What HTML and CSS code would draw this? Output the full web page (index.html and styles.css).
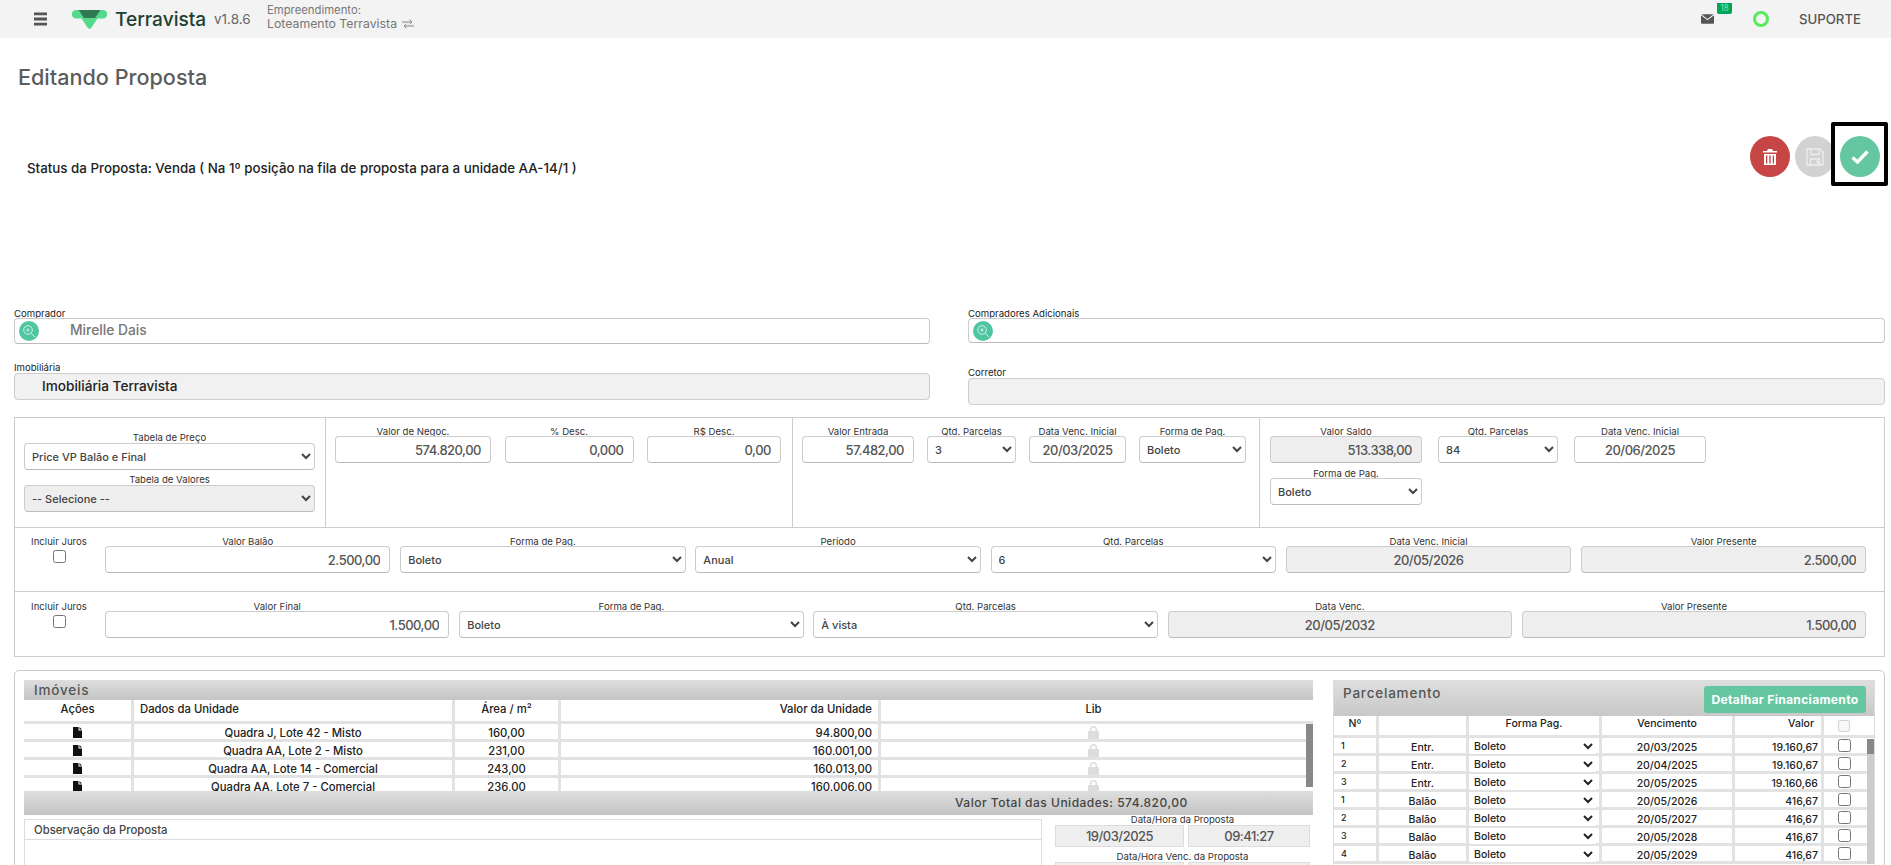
FILE: index.html
```html
<!DOCTYPE html>
<html lang="pt-BR">
<head>
<meta charset="utf-8">
<title>Editando Proposta</title>
<link rel="stylesheet" href="styles.css">
</head>
<body>
<header class="topbar">
  <svg class="burger" viewBox="0 0 14 14"><path d="M0 0h14v3H0zM0 5.500h14v3H0zM0 11h14v3H0z"/></svg>
  <svg class="logo" viewBox="0 0 35 19"><path d="M4 0h27a4 4 0 0 1 0 8.500h-5.500L19.300 17.800a2.200 2.200 0 0 1-3.600 0L9.500 8.500H4a4 4 0 0 1 0-8.500z" fill="#55d98d"/><path d="M6.500 0h22l-5.500 8H12z" fill="#2f7a52"/></svg>
  <span class="brand">Terravista</span>
  <span class="version">v1.8.6</span>
  <div class="venture">
    <span>Empreendimento:</span>
    <span class="venture-name">Loteamento Terravista <svg class="swap" viewBox="0 0 12 10"><path d="M0 3h9.500M7.500 .8 10 3 7.500 5.200M12 7H2.500M4.500 4.800 2 7l2.500 2.200" fill="none" stroke="#888" stroke-width="1"/></svg></span>
  </div>
  <div class="top-right">
    <div class="mail">
      <svg viewBox="0 0 14 10"><path d="M.6 0h12.800L7 5zM0 1l7 5.400L14 1v8a1 1 0 0 1-1 1H1a1 1 0 0 1-1-1z" fill="#555"/></svg>
      <span class="badge">18</span>
    </div>
    <span class="ring"></span>
    <span class="support">SUPORTE</span>
  </div>
</header>

<main class="page">
  <h1 class="title">Editando Proposta</h1>

  <section class="status-row">
    <p class="status">Status da Proposta: Venda ( Na 1º posição na fila de proposta para a unidade AA-14/1 )</p>
    <div class="actions">
      <button class="round red" type="button"><svg viewBox="0 0 14 16"><path d="M5 0h4l1 2h4v1.500H0V2h4zM1 5h12v11H1zM3 6.500v8h1.300v-8zM6.300 6.500v8h1.400v-8zM9.700 6.500v8H11v-8z" fill="#fff" fill-rule="evenodd"/></svg></button>
      <button class="round grey" type="button"><svg viewBox="0 0 18 18"><path d="M1 1h13l3 3v13H1zM5 1.500v5h8v-5M4.500 17v-6h9v6M10 13.500h2V17" fill="none" stroke="#eee" stroke-width="1.300"/></svg></button>
      <div class="focus-box">
        <button class="round green" type="button"><svg viewBox="0 0 18 14"><path d="M1.500 7.500 6.500 12 16.500 1.500" fill="none" stroke="#fff" stroke-width="3.400"/></svg></button>
      </div>
    </div>
  </section>

  <section class="people">
    <div class="person">
      <label class="lbl-left tight">Comprador</label>
      <div class="picker">
        <span class="lens"><svg viewBox="0 0 14 14"><circle cx="6" cy="6" r="4.300" fill="none" stroke="#cdf3e5" stroke-width="1"/><path d="M9.300 9.300 13 13M6 4.300v3.400M4.300 6h3.400" stroke="#cdf3e5" stroke-width="1" fill="none"/></svg></span>
        <span class="picker-text">Mirelle Dais</span>
      </div>
    </div>
    <div class="person">
      <label class="lbl-left tight">Compradores Adicionais</label>
      <div class="picker short">
        <span class="lens"><svg viewBox="0 0 14 14"><circle cx="6" cy="6" r="4.300" fill="none" stroke="#cdf3e5" stroke-width="1"/><path d="M9.300 9.300 13 13M6 4.300v3.400M4.300 6h3.400" stroke="#cdf3e5" stroke-width="1" fill="none"/></svg></span>
      </div>
    </div>
    <div class="person">
      <label class="lbl-left">Imobiliária</label>
      <div class="locked"><span>Imobiliária Terravista</span></div>
    </div>
    <div class="person lower">
      <label class="lbl-left">Corretor</label>
      <div class="locked"></div>
    </div>
  </section>

  <section class="deal">
    <div class="deal-top">
      <div class="cell cell-table">
        <div class="f"><label>Tabela de Preço</label><select><option>Price VP Balão e Final</option></select></div>
        <div class="f"><label>Tabela de Valores</label><select class="off"><option>-- Selecione --</option></select></div>
      </div>
      <div class="cell cell-neg">
        <div class="f"><label>Valor de Negoc.</label><input class="num" value="574.820,00" readonly></div>
        <div class="f"><label>% Desc.</label><input class="num" value="0,000" readonly></div>
        <div class="f"><label>R$ Desc.</label><input class="num" value="0,00" readonly></div>
      </div>
      <div class="cell cell-ent">
        <div class="f"><label>Valor Entrada</label><input class="num" value="57.482,00" readonly></div>
        <div class="f"><label>Qtd. Parcelas</label><select><option>3</option></select></div>
        <div class="f"><label>Data Venc. Inicial</label><input class="mid" value="20/03/2025" readonly></div>
        <div class="f"><label>Forma de Pag.</label><select><option>Boleto</option></select></div>
      </div>
      <div class="cell cell-saldo">
        <div class="f"><label>Valor Saldo</label><input class="num off" value="513.338,00" readonly></div>
        <div class="f"><label>Qtd. Parcelas</label><select><option>84</option></select></div>
        <div class="f"><label>Data Venc. Inicial</label><input class="mid" value="20/06/2025" readonly></div>
        <div class="f"><label>Forma de Pag.</label><select><option>Boleto</option></select></div>
      </div>
    </div>
    <div class="deal-row row-balao">
      <div class="juros"><label>Incluir Juros</label><input type="checkbox"></div>
      <div class="f"><label>Valor Balão</label><input class="num" value="2.500,00" readonly></div>
      <div class="f"><label>Forma de Pag.</label><select><option>Boleto</option></select></div>
      <div class="f"><label>Período</label><select><option>Anual</option></select></div>
      <div class="f"><label>Qtd. Parcelas</label><select><option>6</option></select></div>
      <div class="f"><label>Data Venc. Inicial</label><input class="mid off" value="20/05/2026" readonly></div>
      <div class="f"><label>Valor Presente</label><input class="num off" value="2.500,00" readonly></div>
    </div>
    <div class="deal-row row-final">
      <div class="juros"><label>Incluir Juros</label><input type="checkbox"></div>
      <div class="f"><label>Valor Final</label><input class="num" value="1.500,00" readonly></div>
      <div class="f"><label>Forma de Pag.</label><select><option>Boleto</option></select></div>
      <div class="f"><label>Qtd. Parcelas</label><select><option>À vista</option></select></div>
      <div class="f"><label>Data Venc.</label><input class="mid off" value="20/05/2032" readonly></div>
      <div class="f"><label>Valor Presente</label><input class="num off" value="1.500,00" readonly></div>
    </div>
  </section>

  <section class="lower-panel">
    <div class="lower-left">
      <div class="units">
        <div class="bar bar-title">Imóveis</div>
        <div class="units-head units-grid">
          <span class="c">Ações</span><span>Dados da Unidade</span><span class="c">Área / m²</span><span class="r">Valor da Unidade</span><span class="c">Lib</span>
        </div>
        <div class="units-body">
          <div class="units-rows">
            <div class="units-grid urow"><span class="c"><svg class="file" viewBox="0 0 9 11"><path d="M0 0h5.500v3.500H9V11H0zM6.500 0 9 2.500H6.500z"/></svg></span><span class="c">Quadra J, Lote 42 - Misto</span><span class="c">160,00</span><span class="r">94.800,00</span><span class="c"><svg class="lock" viewBox="0 0 11 13"><path d="M2 5V3.500a3.500 3.500 0 0 1 7 0V5h1a1 1 0 0 1 1 1v6a1 1 0 0 1-1 1H1a1 1 0 0 1-1-1V6a1 1 0 0 1 1-1zM3.500 5h4V3.500a2 2 0 0 0-4 0z"/></svg></span></div>
            <div class="units-grid urow"><span class="c"><svg class="file" viewBox="0 0 9 11"><path d="M0 0h5.500v3.500H9V11H0zM6.500 0 9 2.500H6.500z"/></svg></span><span class="c">Quadra AA, Lote 2 - Misto</span><span class="c">231,00</span><span class="r">160.001,00</span><span class="c"><svg class="lock" viewBox="0 0 11 13"><path d="M2 5V3.500a3.500 3.500 0 0 1 7 0V5h1a1 1 0 0 1 1 1v6a1 1 0 0 1-1 1H1a1 1 0 0 1-1-1V6a1 1 0 0 1 1-1zM3.500 5h4V3.500a2 2 0 0 0-4 0z"/></svg></span></div>
            <div class="units-grid urow"><span class="c"><svg class="file" viewBox="0 0 9 11"><path d="M0 0h5.500v3.500H9V11H0zM6.500 0 9 2.500H6.500z"/></svg></span><span class="c">Quadra AA, Lote 14 - Comercial</span><span class="c">243,00</span><span class="r">160.013,00</span><span class="c"><svg class="lock" viewBox="0 0 11 13"><path d="M2 5V3.500a3.500 3.500 0 0 1 7 0V5h1a1 1 0 0 1 1 1v6a1 1 0 0 1-1 1H1a1 1 0 0 1-1-1V6a1 1 0 0 1 1-1zM3.500 5h4V3.500a2 2 0 0 0-4 0z"/></svg></span></div>
            <div class="units-grid urow"><span class="c"><svg class="file" viewBox="0 0 9 11"><path d="M0 0h5.500v3.500H9V11H0zM6.500 0 9 2.500H6.500z"/></svg></span><span class="c">Quadra AA, Lote 7 - Comercial</span><span class="c">236,00</span><span class="r">160.006,00</span><span class="c"><svg class="lock" viewBox="0 0 11 13"><path d="M2 5V3.500a3.500 3.500 0 0 1 7 0V5h1a1 1 0 0 1 1 1v6a1 1 0 0 1-1 1H1a1 1 0 0 1-1-1V6a1 1 0 0 1 1-1zM3.500 5h4V3.500a2 2 0 0 0-4 0z"/></svg></span></div>
          </div>
          <div class="units-scroll"></div>
        </div>
        <div class="bar bar-total"><span>Valor Total das Unidades: 574.820,00</span></div>
      </div>
      <div class="notes-line">
        <div class="notes"><div class="notes-head">Observação da Proposta</div></div>
        <div class="dates">
          <label>Data/Hora da Proposta</label>
          <div class="date-pair"><input class="mid off" value="19/03/2025" readonly><input class="mid off" value="09:41:27" readonly></div>
          <label class="second">Data/Hora Venc. da Proposta</label>
          <div class="date-pair"><input class="mid off" readonly><input class="mid off" readonly></div>
        </div>
      </div>
    </div>
    <div class="plan">
      <div class="plan-top"><span class="plan-title">Parcelamento</span><button class="detail" type="button">Detalhar Financiamento</button></div>
      <div class="plan-head plan-grid">
        <span class="c bold">Nº</span><span></span><span class="c">Forma Pag.</span><span class="c">Vencimento</span><span class="r pad">Valor</span><span class="c"><input type="checkbox" disabled></span>
      </div>
      <div class="plan-body">
        <div class="plan-rows">
          <div class="plan-grid prow"><span class="n">1</span><span class="c">Entr.</span><span><select><option>Boleto</option></select></span><span class="c">20/03/2025</span><span class="r">19.160,67</span><span class="c"><input type="checkbox"></span></div>
          <div class="plan-grid prow"><span class="n">2</span><span class="c">Entr.</span><span><select><option>Boleto</option></select></span><span class="c">20/04/2025</span><span class="r">19.160,67</span><span class="c"><input type="checkbox"></span></div>
          <div class="plan-grid prow"><span class="n">3</span><span class="c">Entr.</span><span><select><option>Boleto</option></select></span><span class="c">20/05/2025</span><span class="r">19.160,66</span><span class="c"><input type="checkbox"></span></div>
          <div class="plan-grid prow"><span class="n">1</span><span class="c">Balão</span><span><select><option>Boleto</option></select></span><span class="c">20/05/2026</span><span class="r">416,67</span><span class="c"><input type="checkbox"></span></div>
          <div class="plan-grid prow"><span class="n">2</span><span class="c">Balão</span><span><select><option>Boleto</option></select></span><span class="c">20/05/2027</span><span class="r">416,67</span><span class="c"><input type="checkbox"></span></div>
          <div class="plan-grid prow"><span class="n">3</span><span class="c">Balão</span><span><select><option>Boleto</option></select></span><span class="c">20/05/2028</span><span class="r">416,67</span><span class="c"><input type="checkbox"></span></div>
          <div class="plan-grid prow"><span class="n">4</span><span class="c">Balão</span><span><select><option>Boleto</option></select></span><span class="c">20/05/2029</span><span class="r">416,67</span><span class="c"><input type="checkbox"></span></div>
        </div>
        <div class="plan-scroll"><span></span></div>
      </div>
    </div>
  </section>
</main>
</body>
</html>
```
FILE: styles.css
```css
* { box-sizing: border-box; }
html, body { margin: 0; height: 865px; overflow: hidden; background: #fff; }
body { font-family: Inter, "Open Sans", sans-serif; color: #222; font-size: 11px; }

.topbar { height: 38px; background: #f3f3f3; display: flex; align-items: center; padding-left: 34px; }
.burger { width: 13px; height: 14px; fill: #555; margin-right: 25px; }
.logo { width: 35px; height: 19px; margin-right: 8px; }
.brand { font-size: 19.100px; font-weight: 500; color: #1d4034; width: 99px; }
.version { font-size: 13.500px; color: #666; width: 53px; }
.venture { display: flex; flex-direction: column; gap: 2px; font-size: 11.300px; color: #777; line-height: 12px; margin-top: -5px; }
.venture-name { display: flex; align-items: center; gap: 4px; font-size: 12.300px; }
.swap { width: 14px; height: 10px; }
.top-right { margin-left: auto; display: flex; align-items: center; padding-right: 29px; height: 100%; }
.mail { position: relative; width: 13px; height: 10px; margin-right: 39px; margin-top: -1px; }
.mail svg { display: block; width: 13px; height: 10px; }
.badge { position: absolute; left: 16px; top: -11px; width: 15px; height: 11px; background: #00a65a; color: #7fe0b0; border-radius: 0 0 2px 2px; font-size: 8.500px; line-height: 11px; text-align: center; }
.ring { width: 16px; height: 16px; border: 3px solid #56ea5c; border-radius: 50%; margin-right: 30px; }
.support { font-size: 13.200px; font-weight: 500; color: #555; width: 63px; }

.page { padding: 0 6px 0 14px; }
.title { margin: 27px 0 0 4px; font-size: 21.600px; line-height: 24px; font-weight: 500; color: #5c5c5c; }

.status-row { display: flex; justify-content: space-between; margin-top: 33px; margin-right: -3px; height: 64px; }
.status { margin: 37px 0 0 13px; font-size: 13.350px; line-height: 18px; font-weight: 500; color: #222; }
.actions { display: flex; align-items: flex-start; gap: 5px; }
.round { width: 40px; height: 41px; border: 0; border-radius: 50%; padding: 0; margin-top: 14px; display: flex; align-items: center; justify-content: center; }
.red { background: #c64645; }
.red svg { width: 14px; height: 16px; }
.grey { background: #d2d2d2; }
.grey svg { width: 18px; height: 18px; }
.green { background: #65c7a2; margin: 10px 5px 0 5px; }
.green svg { width: 18px; height: 14px; }
.focus-box { width: 57px; height: 64px; border: 4px solid #000; border-radius: 2px; margin-left: -9px; position: relative; }

.people { display: grid; grid-template-columns: 916px 917px; column-gap: 38px; margin-top: 123px; row-gap: 19px; }
.person { display: flex; flex-direction: column; }
.person.lower { margin-top: 5px; }
.lbl-left { font-size: 9.600px; line-height: 10px; height: 10px; color: #222; }
.lbl-left.tight { margin-bottom: -1px; }
.picker { height: 26px; border: 1px solid #ccc; border-bottom-color: #bbb; border-radius: 4px; display: flex; align-items: center; padding-left: 4px; background: #fff; }
.picker.short { height: 25px; align-items: flex-start; padding-top: 2px; }
.lens { width: 20px; height: 20px; border-radius: 50%; background: #4fc6a1; display: flex; align-items: center; justify-content: center; flex: none; }
.lens svg { width: 14px; height: 14px; }
.picker-text { margin: -3px 0 0 31px; font-size: 13.800px; font-weight: 500; color: #777; }
.locked { height: 27px; background: #f1f1f1; border: 1px solid #ccc; border-radius: 4px; display: flex; align-items: center; padding-left: 27px; font-size: 13.600px; font-weight: 500; color: #222; }
.locked span { margin-top: -2px; }

.deal { margin-top: 12px; border: 1px solid #ccc; height: 240px; display: flex; flex-direction: column; }
.deal-top { height: 110px; display: grid; grid-template-columns: 310px 467px 467px 1fr; border-bottom: 1px solid #ccc; flex: none; }
.cell { border-left: 1px solid #ccc; }
.cell:first-child { border-left: 0; }
.f { display: flex; flex-direction: column; min-width: 0; }
.f label { font-size: 9.600px; line-height: 9px; text-align: center; color: #333; height: 9px; white-space: nowrap; }
.f input, .f select, .date-pair input { width: 100%; height: 27px; border: 1px solid #ccc; border-bottom-color: #bbb; border-radius: 4px; font: 500 13px Inter, sans-serif; letter-spacing: -.5px; color: #555; background: #fff; outline: 0; padding: 0 9px; min-width: 0; }
.f select { font-size: 11px; letter-spacing: 0; color: #444; padding: 0 3px; }
.f input.off, .f select.off, .date-pair input.off { background: #eee; }
.num { text-align: right; }
.mid { text-align: center; }

.cell-table { padding: 15px 10px 0 9px; display: flex; flex-direction: column; gap: 5px; }
.cell-table .f label { height: 10px; line-height: 10px; }
.cell-neg { padding: 9px 10px 0 9px; display: grid; grid-template-columns: 156px 129px 134px; column-gap: 13.500px; align-content: start; }
.cell-ent { padding: 9px 11px 0 9px; display: grid; grid-template-columns: 112px 89px 97px 107px; column-gap: 13px; align-content: start; }
.cell-saldo { padding: 9px 10px 0 10px; display: grid; grid-template-columns: 152px 120px 132px; column-gap: 16px; row-gap: 6px; align-content: start; }
.cell-saldo .f:last-child { grid-column: 1; }

.deal-row { display: grid; align-content: start; padding: 9px 0 0 0; border-bottom: 1px solid #ccc; flex: none; height: 64px; column-gap: 9.700px; }
.deal-row:last-child { border-bottom: 0; padding-top: 10px; }
.row-balao { grid-template-columns: 80.300px repeat(6, 285.500px); }
.row-final { grid-template-columns: 80.300px repeat(5, 344.500px); }
.juros { display: flex; flex-direction: column; align-items: flex-start; }
.juros label { font-size: 9.600px; line-height: 9px; color: #333; margin-bottom: 4px; width: 88px; text-align: center; white-space: nowrap; }
.juros input { margin: 0 0 0 38px; width: 13px; height: 13px; }

.lower-panel { margin-top: 13px; border: 1px solid #ccc; border-radius: 5px; height: 260px; padding: 9px 10px 0 9px; display: grid; grid-template-columns: 1289px 542px; column-gap: 20px; }
.bar { background: linear-gradient(#dedede, #c4c4c4); color: #555; }
.bar-title { height: 20px; line-height: 20px; padding-left: 10px; font-size: 13.500px; font-weight: 500; letter-spacing: .8px; }
.units-grid { display: grid; grid-template-columns: 107px 321px 106px 320px 1fr; }
.units-grid > span { border-left: 3px solid #e2e2e2; padding: 0 6px; min-width: 0; }
.units-grid > span:first-child { border-left: 0; }
.units-head { height: 24px; border-bottom: 3px solid #e2e2e2; font-size: 11.300px; font-weight: 500; line-height: 18px; color: #222; }
.units-head > span:last-child { padding-right: 13px; }
.units-body { height: 67px; display: flex; overflow: hidden; }
.units-rows { flex: 1; overflow: hidden; }
.urow { height: 18px; border-bottom: 3px solid #e2e2e2; font-size: 11.300px; font-weight: 500; line-height: 18px; }
.units-scroll { width: 7px; height: 63px; background: #888; }
.c { text-align: center; }
.r { text-align: right; }
.file { width: 9px; height: 11px; fill: #111; display: inline-block; vertical-align: -1px; }
.lock { width: 11px; height: 13px; fill: #ddd; display: inline-block; vertical-align: -2px; }
.bar-total { height: 24px; line-height: 24px; font-size: 12px; font-weight: 500; letter-spacing: .5px; color: #444; padding-left: 931px; }

.notes-line { display: grid; grid-template-columns: 1018px 1fr; column-gap: 13px; margin-top: 3px; }
.notes { border: 1px solid #ddd; height: 60px; margin-top: 1px; }
.notes-head { height: 20px; line-height: 20px; border-bottom: 1px solid #ddd; padding-left: 9px; font-size: 11.300px; font-weight: 500; color: #444; }
.dates { text-align: center; font-size: 9.600px; margin-right: 3px; }
.dates label { display: block; line-height: 10px; height: 10px; margin-top: -3px; color: #333; }
.dates label.second { margin-top: 5px; }
.date-pair { display: grid; grid-template-columns: 129px 1fr; column-gap: 4px; }
.date-pair input { height: 22px; border-radius: 0; border-color: #ddd; padding: 0; }

.plan { display: flex; flex-direction: column; border: 1px solid #ddd; border-bottom: 0; }
.plan-top { height: 35px; background: linear-gradient(#dedede, #c8c8c8); display: flex; justify-content: space-between; align-items: flex-start; padding: 5px 8px 0 9px; flex: none; }
.plan-title { font-size: 13.500px; font-weight: 500; letter-spacing: .8px; color: #555; line-height: 14px; }
.detail { width: 162px; height: 27px; border: 0; border-radius: 3px; background: #65c7a2; color: #fff; font: 700 12.100px Inter, sans-serif; letter-spacing: .3px; padding: 0; }
.plan-grid { display: grid; grid-template-columns: 42px 90px 133px 133px 89px 1fr; }
.plan-grid > span { border-left: 3px solid #e2e2e2; min-width: 0; padding: 0 3px; }
.plan-grid > span:first-child { border-left: 0; }
.plan-head { height: 22px; border-bottom: 3px solid #e2e2e2; font-size: 10.500px; font-weight: 500; line-height: 16px; flex: none; }
.plan-head .pad { padding-right: 7px; }
.plan-head input { width: 12px; height: 12px; margin: 4px 11px 0 0; }
.plan-body { display: flex; overflow: hidden; }
.plan-rows { flex: 1; }
.plan-scroll { width: 7px; background: #ccc; margin-top: 1px; }
.plan-scroll span { display: block; height: 15px; background: #888; }
.prow { height: 18px; border-bottom: 3px solid #e2e2e2; font-size: 10.500px; font-weight: 500; line-height: 19px; }
.plan-grid > span.n { font-size: 9px; padding-left: 7px; line-height: 15px; }
.prow select { width: calc(100% + 2px); height: 15px; margin: 1px 0 0 -2px; border: 0; background: #fff; font: 500 10.500px Inter, sans-serif; color: #222; padding: 0; outline: 0; display: block; }
.prow input { width: 13px; height: 13px; margin: 1px 2px 0 0; }
```
